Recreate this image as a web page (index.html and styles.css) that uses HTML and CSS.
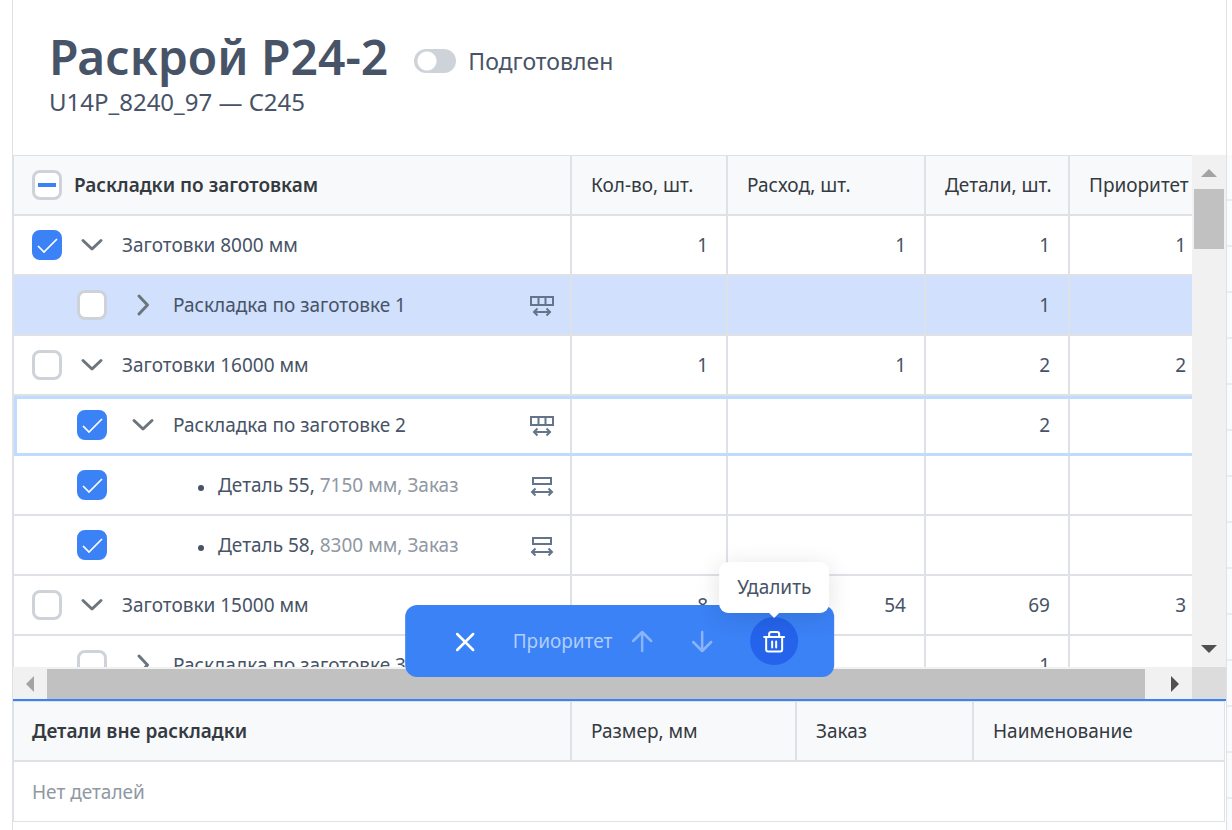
FILE: index.html
```html
<!DOCTYPE html>
<html lang="ru">
<head>
<meta charset="utf-8">
<meta name="viewport" content="width=device-width, initial-scale=1">
<title>Раскрой P24-2</title>
<link rel="stylesheet" href="styles.css">
</head>
<body>
<svg class="sprite" aria-hidden="true">
  <symbol id="chevron-down" viewBox="0 0 24 24"><path d="M3 7.500L12 16l9-8.500" fill="none" stroke="currentColor" stroke-width="3" stroke-linecap="round" stroke-linejoin="round"/></symbol>
  <symbol id="chevron-right" viewBox="0 0 24 24"><path d="M8 3l8.500 9L8 21" fill="none" stroke="currentColor" stroke-width="3" stroke-linecap="round" stroke-linejoin="round"/></symbol>
  <symbol id="layout-fit" viewBox="0 0 24 24"><path d="M1 4h22v8H1zM8.500 4v8M15.500 4v8M4 19h16M7.500 15.500L4 19l3.500 3.500M16.500 15.500L20 19l-3.500 3.500" fill="none" stroke="currentColor" stroke-width="2"/></symbol>
  <symbol id="part-fit" viewBox="0 0 24 24"><path d="M3 5h18v6H3zM2 19h20M5.500 15.500L2 19l3.500 3.500M18.500 15.500L22 19l-3.500 3.500" fill="none" stroke="currentColor" stroke-width="2"/></symbol>
</svg>
<div class="app">
  <main class="panel">
    <header class="page-head">
      <div class="title-row">
        <h1 class="title">Раскрой P24-2</h1>
        <label class="toggle"><input class="switch" type="checkbox" role="switch">Подготовлен</label>
      </div>
      <p class="subtitle">U14P_8240_97 — C245</p>
    </header>

    <section class="scroller">
      <div class="viewport">
        <table class="grid layouts">
          <colgroup><col><col class="w-qty"><col class="w-use"><col class="w-parts"><col class="w-prio"></colgroup>
          <thead>
            <tr>
              <th><div class="tree head"><input class="check partial" id="all" type="checkbox" aria-checked="mixed"><label class="strong" for="all">Раскладки по заготовкам</label></div></th>
              <th>Кол-во, шт.</th><th>Расход, шт.</th><th>Детали, шт.</th><th>Приоритет</th>
            </tr>
          </thead>
          <tbody>
            <tr>
              <td><div class="tree"><input class="check" id="r1" type="checkbox" checked><button class="expand" aria-label="Свернуть"><svg><use href="#chevron-down"/></svg></button><label for="r1">Заготовки 8000 мм</label></div></td>
              <td>1</td><td>1</td><td>1</td><td>1</td>
            </tr>
            <tr class="hovered">
              <td><div class="tree nested"><input class="check" id="r2" type="checkbox"><button class="expand" aria-label="Развернуть"><svg><use href="#chevron-right"/></svg></button><label for="r2">Раскладка по заготовке 1</label><svg class="fit"><use href="#layout-fit"/></svg></div></td>
              <td></td><td></td><td>1</td><td></td>
            </tr>
            <tr>
              <td><div class="tree"><input class="check" id="r3" type="checkbox"><button class="expand" aria-label="Свернуть"><svg><use href="#chevron-down"/></svg></button><label for="r3">Заготовки 16000 мм</label></div></td>
              <td>1</td><td>1</td><td>2</td><td>2</td>
            </tr>
            <tr class="current">
              <td><div class="tree nested"><input class="check" id="r4" type="checkbox" checked><button class="expand" aria-label="Свернуть"><svg><use href="#chevron-down"/></svg></button><label for="r4">Раскладка по заготовке 2</label><svg class="fit"><use href="#layout-fit"/></svg></div></td>
              <td></td><td></td><td>2</td><td></td>
            </tr>
            <tr>
              <td><div class="tree nested leaf"><input class="check" id="r5" type="checkbox" checked><span class="dot"></span><label for="r5">Деталь 55, <span class="muted">7150 мм, Заказ</span></label><svg class="fit"><use href="#part-fit"/></svg></div></td>
              <td></td><td></td><td></td><td></td>
            </tr>
            <tr>
              <td><div class="tree nested leaf"><input class="check" id="r6" type="checkbox" checked><span class="dot"></span><label for="r6">Деталь 58, <span class="muted">8300 мм, Заказ</span></label><svg class="fit"><use href="#part-fit"/></svg></div></td>
              <td></td><td></td><td></td><td></td>
            </tr>
            <tr>
              <td><div class="tree"><input class="check" id="r7" type="checkbox"><button class="expand" aria-label="Свернуть"><svg><use href="#chevron-down"/></svg></button><label for="r7">Заготовки 15000 мм</label></div></td>
              <td>8</td><td>54</td><td>69</td><td>3</td>
            </tr>
            <tr>
              <td><div class="tree nested"><input class="check" id="r8" type="checkbox"><button class="expand" aria-label="Развернуть"><svg><use href="#chevron-right"/></svg></button><label for="r8">Раскладка по заготовке 3</label><svg class="fit"><use href="#layout-fit"/></svg></div></td>
              <td></td><td></td><td>1</td><td></td>
            </tr>
          </tbody>
        </table>
      </div>
      <div class="bar vertical">
        <svg class="arrow" viewBox="0 0 34 34"><path d="M9 22l8-8 8 8z" fill="#a3a3a3"/></svg>
        <div class="thumb"></div>
        <svg class="arrow last" viewBox="0 0 34 34"><path d="M9 12l8 8 8-8z" fill="#505050"/></svg>
      </div>
      <div class="bar horizontal">
        <svg class="arrow" viewBox="0 0 34 32"><path d="M21 9l-8 8 8 8z" fill="#a3a3a3"/></svg>
        <div class="thumb"></div>
        <svg class="arrow last" viewBox="0 0 34 32"><path d="M13 9l8 8-8 8z" fill="#505050"/></svg>
      </div>
      <div class="corner"></div>
    </section>

    <section class="loose">
      <table class="grid parts">
        <colgroup><col><col class="w-size"><col class="w-order"><col class="w-name"></colgroup>
        <thead>
          <tr><th class="strong">Детали вне раскладки</th><th>Размер, мм</th><th>Заказ</th><th>Наименование</th></tr>
        </thead>
        <tbody><tr><td class="empty" colspan="4">Нет деталей</td></tr></tbody>
      </table>
    </section>

    <div class="actions" role="toolbar">
      <button class="act" aria-label="Закрыть"><svg viewBox="0 0 24 24"><path d="M4 5l16 16M20 5L4 21" fill="none" stroke="currentColor" stroke-width="2.500" stroke-linecap="round"/></svg></button>
      <span class="act-label">Приоритет</span>
      <button class="act" disabled aria-label="Выше"><svg viewBox="0 0 24 24"><path d="M12 22V3M3 12l9-9 9 9" fill="none" stroke="currentColor" stroke-width="2.500" stroke-linecap="round" stroke-linejoin="round"/></svg></button>
      <button class="act" disabled aria-label="Ниже"><svg viewBox="0 0 24 24"><path d="M12 3v19M3 13l9 9 9-9" fill="none" stroke="currentColor" stroke-width="2.500" stroke-linecap="round" stroke-linejoin="round"/></svg></button>
      <button class="act remove" aria-describedby="tip"><svg viewBox="0 0 24 24"><path d="M2 8h20M4 8v12.500a2 2 0 0 0 2 2h12a2 2 0 0 0 2-2V8M7 8V5a2 2 0 0 1 2-2h6a2 2 0 0 1 2 2v3M10 12.500v6M14 12.500v6" fill="none" stroke="currentColor" stroke-width="2" stroke-linecap="round"/></svg><span class="tip" id="tip" role="tooltip">Удалить</span></button>
    </div>
  </main>
  <aside class="side"></aside>
</div>
</body>
</html>
```
FILE: styles.css
```css
* { box-sizing: border-box; }

body {
  margin: 0;
  background: #fff;
  color: #475366;
  font: 19px/28px "Noto Sans", sans-serif;
}

.sprite { display: none; }

.app {
  display: flex;
  height: 100vh;
  padding-left: 12px;
  overflow: hidden;
}

.panel {
  position: relative;
  display: flex;
  flex-direction: column;
  flex: 1;
  min-width: 0;
  border: solid #dfe1e7;
  border-width: 0 1px;
}

.side {
  width: 5px;
  margin-top: 155px;
  background: repeating-linear-gradient(#fafbfc 0 44px, #e9ebee 44px 46px);
}

.page-head { padding: 27px 36px 39px; }
.title-row { display: flex; align-items: center; gap: 26px; }
.title { margin: 0; font-size: 48px; line-height: 60px; font-weight: 600; }
.subtitle { margin: 0; font-size: 24px; line-height: 29px; }

.toggle { display: flex; align-items: center; gap: 12px; padding-top: 7px; font-size: 23px; }
.switch {
  appearance: none;
  width: 42px;
  height: 24px;
  margin: 0;
  border-radius: 12px;
  background: radial-gradient(circle at 13px 12px, #fff 9px, #ced3da 10px);
}

.scroller {
  flex: 1;
  min-height: 0;
  display: grid;
  grid-template: minmax(0, 1fr) 32px / minmax(0, 1fr) 34px;
}
.viewport { overflow: hidden; }

.grid {
  border-collapse: separate;
  border-spacing: 0;
  table-layout: fixed;
  border: 1px solid #dee2e6;
  border-width: 1px 0 0 1px;
}
.layouts { width: calc(100% + 14px); }
.parts { width: 100%; }

.grid th, .grid td {
  height: 60px;
  padding: 0 18px;
  border: solid #dee2e6;
  border-width: 0 2px 2px 0;
  text-align: right;
  white-space: nowrap;
}
.grid th {
  background: #f8f9fb;
  color: #343a40;
  font-weight: 400;
  text-align: left;
}
.grid th + th { padding-left: 19px; }
.grid td:first-child { text-align: left; }
.grid .strong { font-weight: 600; }
.w-qty { width: 156px; }
.w-use { width: 198px; }
.w-parts { width: 144px; }
.w-prio { width: 136px; }
.w-size { width: 225px; }
.w-order { width: 177px; }
.w-name { width: 251px; }

.tree { display: flex; align-items: center; gap: 18px; }
.tree.head { gap: 12px; }
.tree.nested { padding-left: 45px; }
.nested .expand { margin-left: 6px; }
.nested label { flex: 1; }
.leaf { gap: 14px; }
.dot { width: 6px; height: 6px; margin: 6px 0 0 77px; border-radius: 50%; background: #475366; }
.muted { color: #8f98a3; }
.fit { width: 24px; height: 24px; margin-right: -2px; color: #64748b; }

.check {
  appearance: none;
  flex: none;
  width: 30px;
  height: 30px;
  margin: 0;
  border: 3px solid #ced3da;
  border-radius: 8px;
  background: #fff center / 24px 24px no-repeat;
}
.check:checked {
  border-color: #3b82f6;
  background-color: #3b82f6;
  background-image: url("data:image/svg+xml,%3Csvg xmlns='http://www.w3.org/2000/svg' viewBox='0 0 24 24'%3E%3Cpath d='M3 13l6 6L22 6' fill='none' stroke='white' stroke-width='1.700'/%3E%3C/svg%3E");
}
.check.partial { background-image: linear-gradient(#3b82f6, #3b82f6); background-size: 18px 4px; }

.expand {
  display: flex;
  padding: 0;
  border: 0;
  background: none;
  color: #6c757d;
}
.expand svg { width: 24px; height: 24px; }

.hovered td { background: #d0e0fd; }
.current { outline: 3px solid #bfdbfe; outline-offset: -3px; }

.bar { display: flex; background: #f1f1f1; }
.bar .thumb { background: #c1c1c1; }
.bar .arrow { flex: none; width: 34px; }
.vertical { flex-direction: column; }
.vertical .arrow { height: 34px; }
.vertical .thumb { height: 60px; margin: 0 2px; }
.vertical .last { margin-top: auto; }
.horizontal .arrow { height: 32px; }
.horizontal .thumb { flex: 1; margin: 2px 13px 0 0; }
.corner { background: #dcdcdc; }

.loose { padding: 0 1px 8px 0; border-top: 2px solid #3b82f6; }
.parts th:last-child, .parts td:last-child { border-right-width: 1px; }
.parts .empty { border-bottom-width: 1px; color: #8f98a3; }

.actions {
  position: absolute;
  bottom: 153px;
  left: 50%;
  display: flex;
  align-items: center;
  height: 72px;
  padding: 0 36px;
  border-radius: 12px;
  background: #3b82f6;
  color: #fff;
  transform: translateX(-50%);
}
.act {
  position: relative;
  display: flex;
  align-items: center;
  justify-content: center;
  width: 48px;
  height: 48px;
  margin-left: 12px;
  padding: 0;
  border: 0;
  border-radius: 50%;
  background: none;
  color: inherit;
  font: inherit;
}
.act:first-child { margin-left: 0; }
.act svg { width: 24px; height: 24px; }
.act:disabled { opacity: .4; }
.act-label { margin-left: 24px; margin-right: -6px; color: #b1cdfb; }
.act.remove { margin-left: 24px; background: #2563eb; }

.tip {
  position: absolute;
  bottom: 52px;
  left: 50%;
  padding: 11px 18px 12px;
  border-radius: 9px;
  background: #fff;
  color: #475366;
  box-shadow: 0 4px 24px rgba(0, 0, 0, .12);
  transform: translateX(-50%);
}
.tip::after {
  content: "";
  position: absolute;
  top: 100%;
  left: 50%;
  border: 5px solid transparent;
  border-top-color: #fff;
  transform: translateX(-50%);
}
```
